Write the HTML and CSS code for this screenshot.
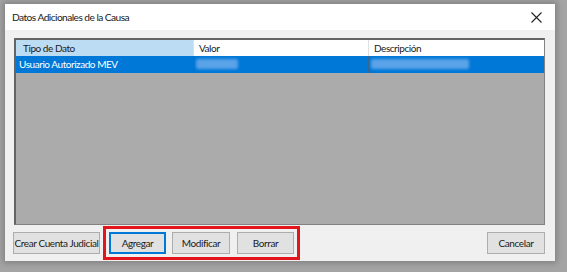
FILE: index.html
```html
<!DOCTYPE html>
<html>
<head>
<meta charset="utf-8">
<link rel="stylesheet" href="styles.css">
</head>
<body>
<div class="window">
  <div class="titlebar">
    <span class="title">Datos Adicionales de la Causa</span>
    <svg class="close" width="11" height="11" viewBox="0 0 11 11"><path d="M0.5 0.5 L10.5 10.5 M10.5 0.5 L0.5 10.5" stroke="#222" stroke-width="1.1" fill="none"/></svg>
  </div>
  <div class="content">
    <div class="grid">
      <div class="row head">
        <div class="cell c1 sel-head">Tipo de Dato</div>
        <div class="cell c2">Valor</div>
        <div class="cell c3">Descripción</div>
      </div>
      <div class="row selected">
        <div class="cell c1 first">Usuario Autorizado MEV</div>
        <div class="cell c2"><span class="blur b1"></span></div>
        <div class="cell c3"><span class="blur b2"></span></div>
      </div>
    </div>
    <div class="buttons">
      <button class="btn crear">Crear Cuenta Judicial</button>
      <button class="btn focus w57">Agregar</button>
      <button class="btn w58">Modificar</button>
      <button class="btn w57">Borrar</button>
      <span class="spacer"></span>
      <button class="btn w58">Cancelar</button>
    </div>
  </div>
  <div class="highlight"></div>
</div>
</body>
</html>
```

FILE: styles.css
```css
html, body {
  margin: 0;
  padding: 0;
}
body {
  background: #a4a4a4;
  width: 567px;
  height: 272px;
  overflow: hidden;
  font-family: Lato, "Liberation Sans", Arial, sans-serif;
}
.window {
  position: relative;
  margin: 4px 0 0 5px;
  width: 550px;
  height: 257px;
  background: #f0f0f0;
  box-shadow: 0 0 6px 2px rgba(0,0,0,0.22);
  display: flex;
  flex-direction: column;
}
.titlebar {
  height: 26px;
  background: #ffffff;
  display: flex;
  align-items: center;
  padding: 0 13px 0 7px;
  flex: none;
}
.title {
  font-family: Lato, "Liberation Sans", sans-serif;
  font-size: 10.2px;
  letter-spacing: -0.55px;
  color: #1a1a1a;
  flex: 1;
}
.close {
  display: block;
  margin-top: 1px;
}
.content {
  flex: 1;
  display: flex;
  flex-direction: column;
  padding: 8px 10px 6px 9px;
}
.grid {
  height: 187px;
  box-sizing: border-box;
  border: 1px solid #828282;
  border-top: 2px solid #646464;
  border-left: 2px solid #646464;
  background: #ababab;
  flex: none;
}
.row {
  display: flex;
  height: 16px;
}
.row.head {
  background: #ffffff;
  height: 16px;
}
.row.selected {
  background: #0078d7;
  color: #ffffff;
  height: 17px;
}
.cell {
  box-sizing: border-box;
  font-size: 10px;
  letter-spacing: -0.45px;
  line-height: 16px;
  padding-left: 5px;
  white-space: nowrap;
  overflow: hidden;
}
.c1 { width: 177px; }
.c2 { width: 175px; border-left: 1px solid #e0e0e0; }
.c3 { flex: 1; border-left: 1px solid #e0e0e0; }
.head .cell { color: #1a1a1a; }
.head .sel-head {
  background: #bcdcf4;
  padding-left: 7px;
}
.selected .cell { line-height: 17px; }
.selected .first { padding-left: 3px; }
.selected .c2, .selected .c3 { border-left: 1px solid #35658f; padding-left: 2px; }
.blur {
  display: inline-block;
  height: 10px;
  margin-top: 3px;
  vertical-align: top;
  background: #5aa3e8;
  filter: blur(1.5px);
  border-radius: 2px;
}
.b1 { width: 42px; }
.b2 { width: 98px; }
.buttons {
  display: flex;
  margin-top: 7px;
  margin-left: -1px;
}
.btn {
  box-sizing: border-box;
  height: 22px;
  background: #e1e1e1;
  border: 1px solid #adadad;
  font-family: Lato, "Liberation Sans", Arial, sans-serif;
  font-size: 10px;
  letter-spacing: -0.4px;
  color: #1a1a1a;
  padding: 0;
  margin: 0;
  white-space: nowrap;
}
.crear { width: 87px; margin-right: 9px; }
.w57 { width: 57px; }
.w58 { width: 58px; }
.focus { border: 2px solid #0078d7; margin-right: 6px; }
.w58 + .w57 { margin-left: 7px; }
.spacer { flex: 1; }
.highlight {
  position: absolute;
  left: 98px;
  top: 222px;
  width: 197px;
  height: 34px;
  box-sizing: border-box;
  border: 3px solid #e3141c;
}
```
